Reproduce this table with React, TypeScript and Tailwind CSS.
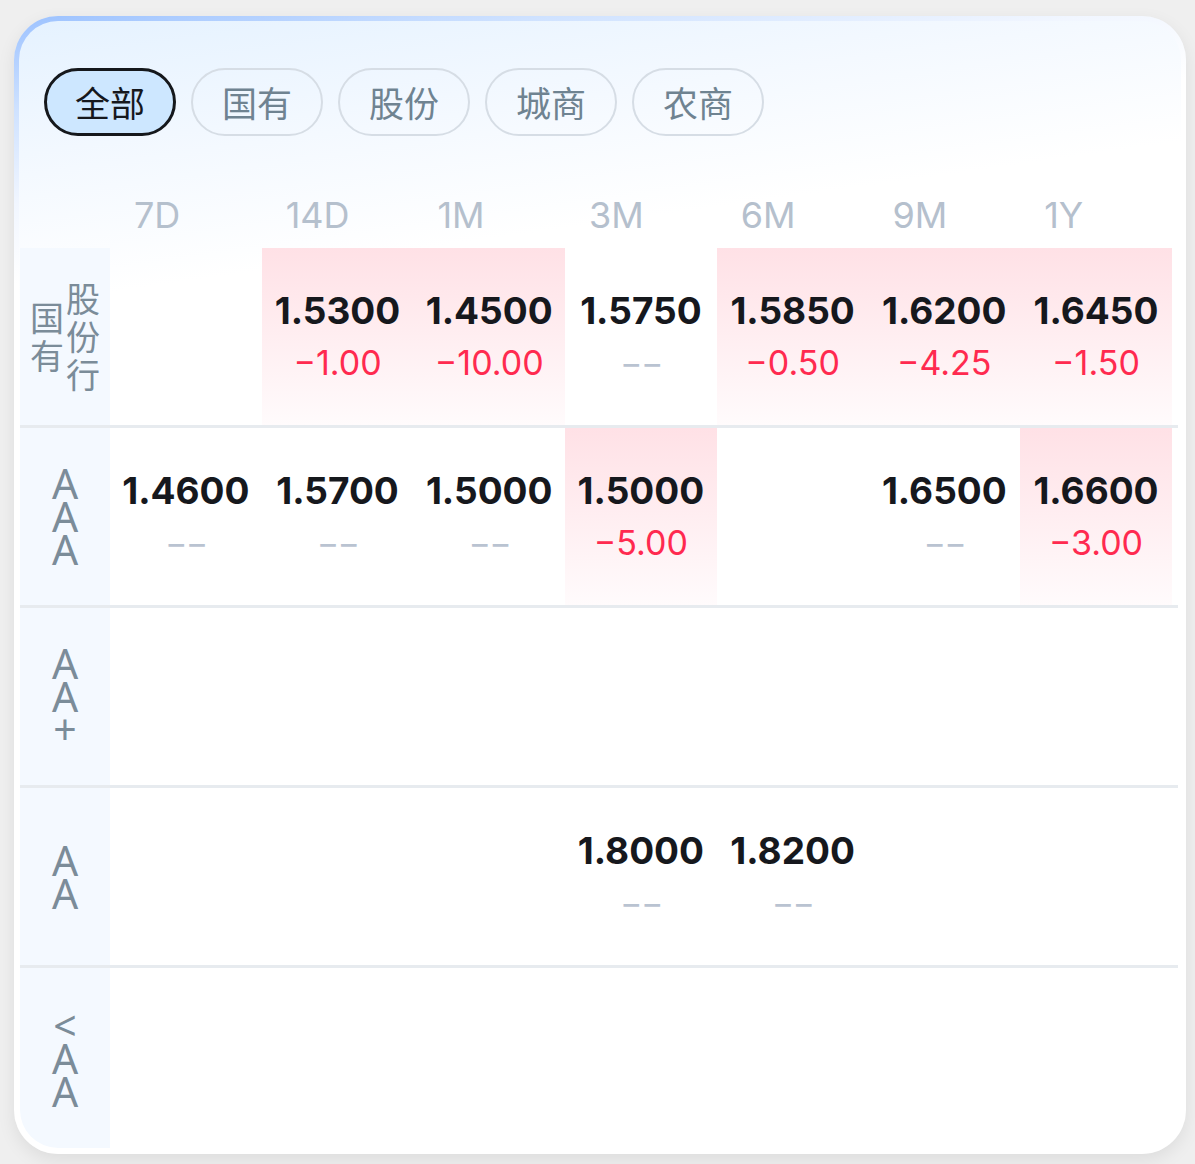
import React from "react";

type Cell = { v: string; c?: string } | null;

interface Row {
  label: string[];
  cjk?: boolean;
  cells: Cell[];
}

const tabs = ["全部", "国有", "股份", "城商", "农商"];
const periods = ["7D", "14D", "1M", "3M", "6M", "9M", "1Y"];

const rows: Row[] = [
  {
    label: ["国有", "股份行"],
    cjk: true,
    cells: [
      null,
      { v: "1.5300", c: "−1.00" },
      { v: "1.4500", c: "−10.00" },
      { v: "1.5750" },
      { v: "1.5850", c: "−0.50" },
      { v: "1.6200", c: "−4.25" },
      { v: "1.6450", c: "−1.50" },
    ],
  },
  {
    label: ["A", "A", "A"],
    cells: [
      { v: "1.4600" },
      { v: "1.5700" },
      { v: "1.5000" },
      { v: "1.5000", c: "−5.00" },
      null,
      { v: "1.6500" },
      { v: "1.6600", c: "−3.00" },
    ],
  },
  { label: ["A", "A", "+"], cells: [null, null, null, null, null, null, null] },
  {
    label: ["A", "A"],
    cells: [null, null, null, { v: "1.8000" }, { v: "1.8200" }, null, null],
  },
  { label: ["<", "A", "A"], cells: [null, null, null, null, null, null, null] },
];

const RowLabel: React.FC<{ row: Row; last: boolean }> = ({ row, last }) => {
  if (row.cjk) {
    return (
      <div className="flex items-center justify-center bg-[#f4f9ff] font-['Noto_Sans','Noto_Sans_CJK_SC',sans-serif] text-[34px] text-[#7b8c99]">
        {row.label.map((col) => (
          <div key={col} className="flex w-[36px] flex-col items-center leading-[38px]">
            {col.split("").map((ch, i) => (
              <span key={i}>{ch}</span>
            ))}
          </div>
        ))}
      </div>
    );
  }
  return (
    <div
      className={`flex flex-col items-center justify-center bg-[#f4f9ff] font-['Noto_Sans',sans-serif] text-[41px] leading-[33px] text-[#7b8c99] ${
        last ? "rounded-bl-[38px]" : ""
      }`}
    >
      {row.label.map((ch, i) => (
        <span key={i}>{ch}</span>
      ))}
    </div>
  );
};

const DataCell: React.FC<{ cell: Cell }> = ({ cell }) => {
  if (!cell) return <div />;
  const pink = !!cell.c;
  return (
    <div
      className={`flex flex-col items-center justify-center font-['Inter',sans-serif] ${
        pink ? "bg-gradient-to-b from-[#ffe1e6] to-[#fffbfc]" : ""
      }`}
    >
      <span className="text-[37px] font-bold leading-[52px] text-[#16181d]">{cell.v}</span>
      {cell.c ? (
        <span className="text-[34px] leading-[52px] text-[#ff2a4f]">{cell.c}</span>
      ) : (
        <span className="text-[34px] leading-[52px] tracking-[-0.05em] text-[#b9c3d1]">−−</span>
      )}
    </div>
  );
};

const App: React.FC = () => {
  return (
    <div className="min-h-screen bg-[#efefef] pl-[14px] pr-[9px] pt-[16px] pb-[10px]">
      <div className="h-[1138px] w-[1172px] rounded-[44px] bg-[linear-gradient(170deg,#9cc2ff_0%,#cfe2ff_7%,#f1f6ff_14%,#ffffff_20%)] p-[5px] shadow-[0_6px_18px_rgba(0,0,0,0.08)]">
        <div className="flex h-full flex-col overflow-hidden rounded-[39px] bg-[linear-gradient(172deg,#e5f2ff_0%,#f4f9ff_12%,#ffffff_22%)]">
          <div className="flex gap-[15px] pl-[25px] pt-[47px]">
            {tabs.map((t, i) => (
              <div
                key={t}
                className={`flex h-[68px] w-[132px] items-center justify-center rounded-full font-['Noto_Sans_CJK_SC',sans-serif] text-[35px] ${
                  i === 0
                    ? "border-[3px] border-[#15181c] bg-[#cde7ff] text-[#16181d]"
                    : "border-[2.5px] border-[#d6dde5] text-[#6f8391]"
                }`}
              >
                {t}
              </div>
            ))}
          </div>

          <div className="mt-[46px] grid h-[66px] grid-cols-[90px_repeat(7,151.7px)] items-center pl-[1px]">
            <div />
            {periods.map((p) => (
              <div key={p} className="pl-[24px] font-['Inter',sans-serif] text-[36px] text-[#b5c0cd]">
                {p}
              </div>
            ))}
          </div>

          <div className="flex flex-col pl-[1px] pr-[3px]">
            {rows.map((row, ri) => {
              const last = ri === rows.length - 1;
              return (
                <div
                  key={ri}
                  className={`grid h-[180px] grid-cols-[90px_repeat(7,151.7px)] ${
                    last ? "" : "border-b-[3px] border-[#e7ebef]"
                  }`}
                >
                  <RowLabel row={row} last={last} />
                  {row.cells.map((cell, ci) => (
                    <DataCell key={ci} cell={cell} />
                  ))}
                </div>
              );
            })}
          </div>
        </div>
      </div>
    </div>
  );
};

export default App;
